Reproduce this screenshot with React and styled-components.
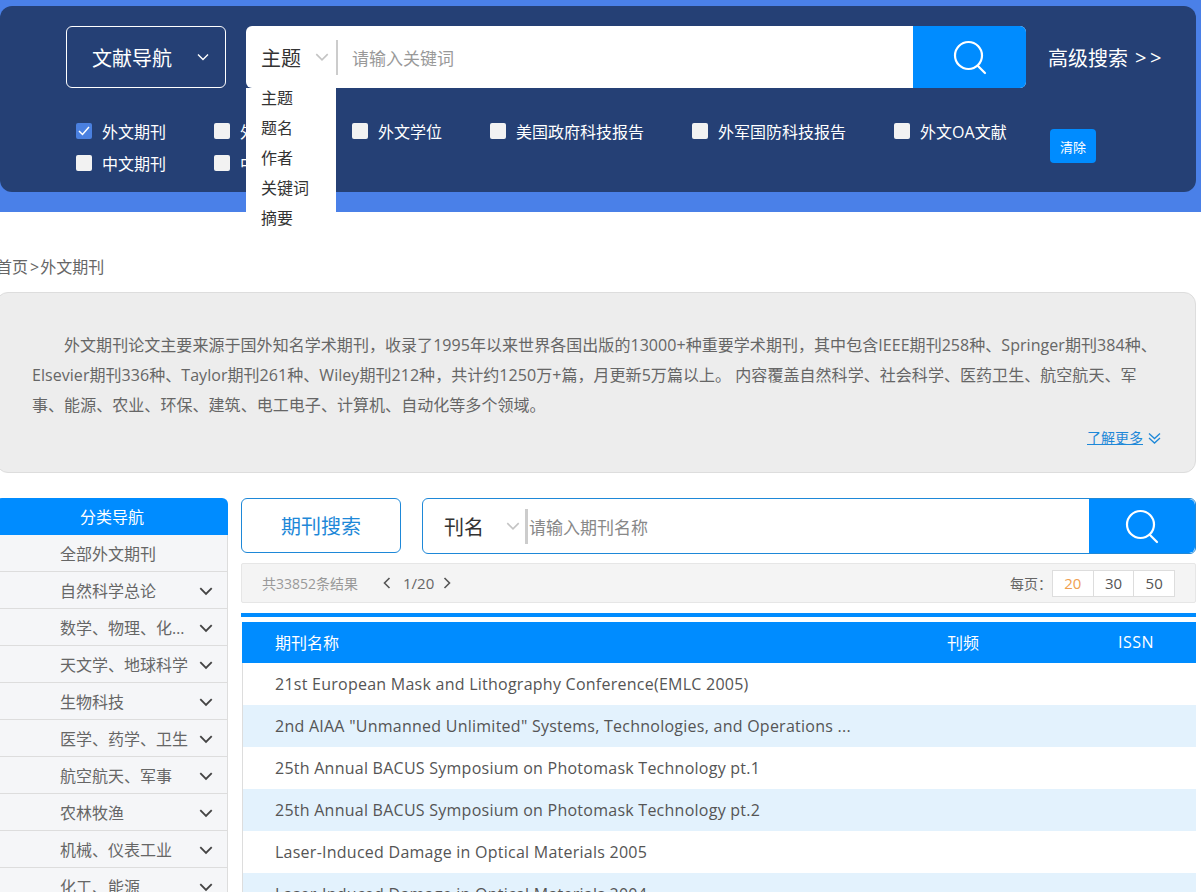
import React from 'react';
import styled, { createGlobalStyle } from 'styled-components';

const Global = createGlobalStyle`
  html, body { margin: 0; padding: 0; background: #fff; overflow: hidden; }
  * { box-sizing: border-box; }
  body { font-family: "Open Sans", "Noto Sans CJK SC", sans-serif; }
`;

const Page = styled.div`
  width: 1201px; height: 892px; overflow: hidden; position: relative;
`;
const Band = styled.header`
  background: #4a80e8; height: 212px; padding: 6px 5px 0 0;
`;
const Panel = styled.div`
  height: 186px; background: #254075; border-radius: 12px; padding: 20px 0 0 66px;
`;
const TopRow = styled.div`display: flex; align-items: stretch; height: 62px;`;
const NavButton = styled.div`
  width: 160px; border: 1px solid #fff; border-radius: 6px; color: #fff; font-size: 20px;
  display: flex; align-items: center; padding: 0 15px 0 25px; justify-content: space-between;
`;
const SearchBox = styled.div`
  margin-left: 20px; width: 780px; display: flex; background: #fff; border-radius: 6px; position: relative;
`;
const SelectWrap = styled.div`
  width: 92px; display: flex; align-items: center; padding-left: 15px; font-size: 20px; color: #333;
  justify-content: space-between; padding-right: 8px; position: relative;
  &::after { content: ""; position: absolute; right: 0; top: 14px; height: 35px; width: 2px; background: #ccc; }
`;
const Placeholder = styled.div`
  flex: 1; display: flex; align-items: center; padding-left: 14px; color: #999; font-size: 17px;
`;
const SearchBtn = styled.div`
  width: ${p => p.$w}px; background: #008cff; display: flex; align-items: center; justify-content: center;
  border-radius: 0 6px 6px 0; flex: none;
`;
const Menu = styled.ul`
  position: absolute; left: 0; top: 62px; width: 90px; height: 145px; margin: 0; padding: 0 0 0 15px;
  list-style: none; background: #fff; z-index: 2;
`;
const MenuItem = styled.li`height: 30px; line-height: 20px; font-size: 16px; color: #333;`;
const Advanced = styled.div`
  margin-left: 22px; color: #fff; font-size: 20px; display: flex; align-items: center;
  span { margin-left: 7px; letter-spacing: 3.5px; }
`;
const FilterRow = styled.div`display: flex; margin-top: 32px; padding-left: 10px;`;
const Filters = styled.div`
  width: 974px; display: flex; flex-wrap: wrap; column-gap: 48px; row-gap: 8px;
`;
const Filter = styled.label`
  display: flex; align-items: center; gap: 10px; color: #fff; font-size: 16px; height: 24px; line-height: 24px;
`;
const Box = styled.span`
  width: 16px; height: 16px; border-radius: 2px; background: ${p => (p.$on ? '#4a80e0' : '#f2f2f2')};
  display: flex; align-items: center; justify-content: center; margin-top: -3px;
`;
const ClearBtn = styled.div`
  width: 46px; height: 34px; background: #008cff; color: #fff; border-radius: 4px; font-size: 13px;
  display: flex; align-items: center; justify-content: center; margin-top: 9px;
`;
const Content = styled.main`margin-left: -4px; width: 1200px;`;
const Crumb = styled.div`
  height: 80px; padding-top: 45px; font-size: 16px; line-height: 20px; color: #666;
`;
const CrumbSep = styled.span`margin: 0 1px 0 2px;`;
const Intro = styled.section`
  height: 181px; background: #ededed; border: 1px solid #ddd; border-radius: 12px; padding: 37px 34px 0 35px;
  color: #666; font-size: 16px; line-height: 30px;
`;
const IntroText = styled.p`margin: 0; text-indent: 32px; letter-spacing: 0.05px;`;
const More = styled.div`
  display: flex; justify-content: flex-end; align-items: center; gap: 5px; margin-top: 8px; font-size: 14px; line-height: 20px;
  a { color: #1e88d8; text-decoration: underline; }
`;
const Body = styled.div`display: flex; margin-top: 25px; align-items: flex-start;`;
const Side = styled.nav`width: 232px; flex: none;`;
const SideHead = styled.div`
  height: 37px; background: #008cff; color: #fff; border-radius: 6px 6px 0 0; text-align: center;
  font-size: 16px; line-height: 38px;
`;
const SideRow = styled.div`
  height: 37px; background: #f5f6f8; border-bottom: 1px solid #ddd; border-right: 1px solid #ddd;
  display: flex; align-items: center; justify-content: space-between; padding: 0 13px 0 64px;
  color: #666; font-size: 16px;
`;
const SideLabel = styled.span`
  width: 128px; white-space: nowrap; overflow: hidden; text-overflow: ellipsis;
`;
const SideChevron = styled.span`display: flex; margin-top: 2px;`;
const Main = styled.div`margin-left: 13px; width: 955px;`;
const SearchRow = styled.div`display: flex; align-items: flex-start; height: 56px;`;
const Tab = styled.div`
  width: 160px; height: 55px; border: 1px solid #1e88d8; border-radius: 6px; color: #1e88d8; font-size: 20px;
  display: flex; align-items: center; justify-content: center;
`;
const JournalSearch = styled.div`
  margin-left: 21px; width: 774px; height: 56px; border: 1px solid #1e88d8; border-radius: 6px; display: flex; overflow: hidden;
`;
const JournalSelect = styled.div`
  width: 105px; flex: none; display: flex; align-items: center; justify-content: space-between; padding: 0 7px 0 21px;
  font-size: 20px; color: #333; position: relative;
  &::after { content: ""; position: absolute; right: 0; top: 10px; height: 35px; width: 3px; background: #ccc; }
`;
const JournalPlaceholder = styled.div`
  flex: 1; display: flex; align-items: center; padding-left: 1px; color: #888; font-size: 17px;
`;
const Tools = styled.div`
  margin-top: 9px; height: 40px; background: #f4f4f4; border: 1px solid #e6e6e6; border-radius: 2px;
  display: flex; align-items: center; padding: 0 20px 0 20px; font-size: 14px;
`;
const Count = styled.span`color: #999;`;
const Pager = styled.div`display: flex; align-items: center; margin-left: 23px; color: #666; font-size: 15px; gap: 7px;`;
const PageNum = styled.span`margin-left: 3px;`;
const PerLabel = styled.span`margin-left: auto; color: #666;`;
const Sizes = styled.div`display: flex; width: 123px; border: 1px solid #ddd; background: #fff; height: 27px;`;
const Size = styled.span`
  flex: 1; display: flex; align-items: center; justify-content: center; font-size: 15px;
  color: ${p => (p.$on ? '#f0a050' : '#555')};
  & + & { border-left: 1px solid #ddd; }
`;
const Rule = styled.div`height: 4px; background: #008cff; margin-top: 10px;`;
const Table = styled.div`margin-top: 5px; margin-left: 1px; border-left: 1px solid #ddd;`;
const THead = styled.div`
  height: 41px; background: #008cff; color: #fff; font-size: 16px; display: flex; align-items: center;
  padding: 0 0 2px 33px; margin-left: -1px;
`;
const ColName = styled.span`width: 672px;`;
const ColFreq = styled.span`width: 171px;`;
const ColIssn = styled.span`letter-spacing: 0.5px;`;
const TRow = styled.div`
  height: 42px; background: ${p => (p.$alt ? '#e3f2fd' : '#fff')}; padding-left: 32px; display: flex; align-items: center;
  color: #555; font-size: 16px; letter-spacing: 0.25px;
`;

const Chevron = ({ color = '#fff', size = 14, w = 1.4 }) => (
  <svg width={size} height={size} viewBox="0 0 14 14" fill="none" stroke={color} strokeWidth={w}><path d="M2 4.5 7 9.5 12 4.5" /></svg>
);
const Side2 = ({ d }) => (
  <svg width="12" height="14" viewBox="0 0 12 14" fill="none" stroke="#555" strokeWidth="1.6"><path d={d} /></svg>
);
const Mag = () => (
  <svg width="36" height="36" viewBox="0 0 36 36" fill="none" stroke="#fff" strokeWidth="2.2">
    <circle cx="16.5" cy="16.5" r="13.5" /><path d="M26 27 33 34" strokeLinecap="round" />
  </svg>
);
const CheckIcon = () => (
  <svg width="12" height="10" viewBox="0 0 12 10" fill="none" stroke="#fff" strokeWidth="1.5"><path d="M1 5 4.5 8.5 11 1" /></svg>
);

const row1 = ['外文期刊', '外文会议', '外文学位', '美国政府科技报告', '外军国防科技报告', '外文OA文献', '中文期刊', '中文会议'];
const menu = ['主题', '题名', '作者', '关键词', '摘要'];
const cats = ['自然科学总论', '数学、物理、化学、力学', '天文学、地球科学', '生物科技', '医学、药学、卫生', '航空航天、军事', '农林牧渔', '机械、仪表工业', '化工、能源'];
const rows = [
  '21st European Mask and Lithography Conference(EMLC 2005)',
  '2nd AIAA "Unmanned Unlimited" Systems, Technologies, and Operations ...',
  '25th Annual BACUS Symposium on Photomask Technology pt.1',
  '25th Annual BACUS Symposium on Photomask Technology pt.2',
  'Laser-Induced Damage in Optical Materials 2005',
  'Laser-Induced Damage in Optical Materials 2004',
];

export default function App() {
  return (
    <Page>
      <Global />
      <Band>
        <Panel>
          <TopRow>
            <NavButton>文献导航<Chevron /></NavButton>
            <SearchBox>
              <SelectWrap>主题<Chevron color="#c4c4c4" size={16} /></SelectWrap>
              <Placeholder>请输入关键词</Placeholder>
              <SearchBtn $w={113}><Mag /></SearchBtn>
              <Menu>{menu.map(m => <MenuItem key={m}>{m}</MenuItem>)}</Menu>
            </SearchBox>
            <Advanced>高级搜索<span>&gt;&gt;</span></Advanced>
          </TopRow>
          <FilterRow>
            <Filters>
              {row1.map((t, i) => (
                <Filter key={t}><Box $on={i === 0}>{i === 0 && <CheckIcon />}</Box>{t}</Filter>
              ))}
            </Filters>
            <ClearBtn>清除</ClearBtn>
          </FilterRow>
        </Panel>
      </Band>
      <Content>
        <Crumb>首页<CrumbSep>&gt;</CrumbSep>外文期刊</Crumb>
        <Intro>
          <IntroText>外文期刊论文主要来源于国外知名学术期刊，收录了1995年以来世界各国出版的13000+种重要学术期刊，其中包含IEEE期刊258种、Springer期刊384种、Elsevier期刊336种、Taylor期刊261种、Wiley期刊212种，共计约1250万+篇，月更新5万篇以上。 内容覆盖自然科学、社会科学、医药卫生、航空航天、军事、能源、农业、环保、建筑、电工电子、计算机、自动化等多个领域。</IntroText>
          <More>
            <a>了解更多</a>
            <svg width="13" height="13" viewBox="0 0 13 13" fill="none" stroke="#1e88d8" strokeWidth="1.3"><path d="M1 1.5 6.5 6.5 12 1.5M1 6 6.5 11 12 6" /></svg>
          </More>
        </Intro>
        <Body>
          <Side>
            <SideHead>分类导航</SideHead>
            <SideRow><SideLabel>全部外文期刊</SideLabel></SideRow>
            {cats.map(c => (
              <SideRow key={c}><SideLabel>{c}</SideLabel><SideChevron><Chevron color="#444" size={16} w={1.6} /></SideChevron></SideRow>
            ))}
          </Side>
          <Main>
            <SearchRow>
              <Tab>期刊搜索</Tab>
              <JournalSearch>
                <JournalSelect>刊名<Chevron color="#c4c4c4" size={16} /></JournalSelect>
                <JournalPlaceholder>请输入期刊名称</JournalPlaceholder>
                <SearchBtn $w={106}><Mag /></SearchBtn>
              </JournalSearch>
            </SearchRow>
            <Tools>
              <Count>共33852条结果</Count>
              <Pager><Side2 d="M8.5 2 3.5 7 8.5 12" /><PageNum>1/20</PageNum><Side2 d="M3.5 2 8.5 7 3.5 12" /></Pager>
              <PerLabel>每页：</PerLabel>
              <Sizes><Size $on>20</Size><Size>30</Size><Size>50</Size></Sizes>
            </Tools>
            <Rule />
            <Table>
              <THead><ColName>期刊名称</ColName><ColFreq>刊频</ColFreq><ColIssn>ISSN</ColIssn></THead>
              {rows.map((r, i) => <TRow key={r} $alt={i % 2 === 1}>{r}</TRow>)}
            </Table>
          </Main>
        </Body>
      </Content>
    </Page>
  );
}
